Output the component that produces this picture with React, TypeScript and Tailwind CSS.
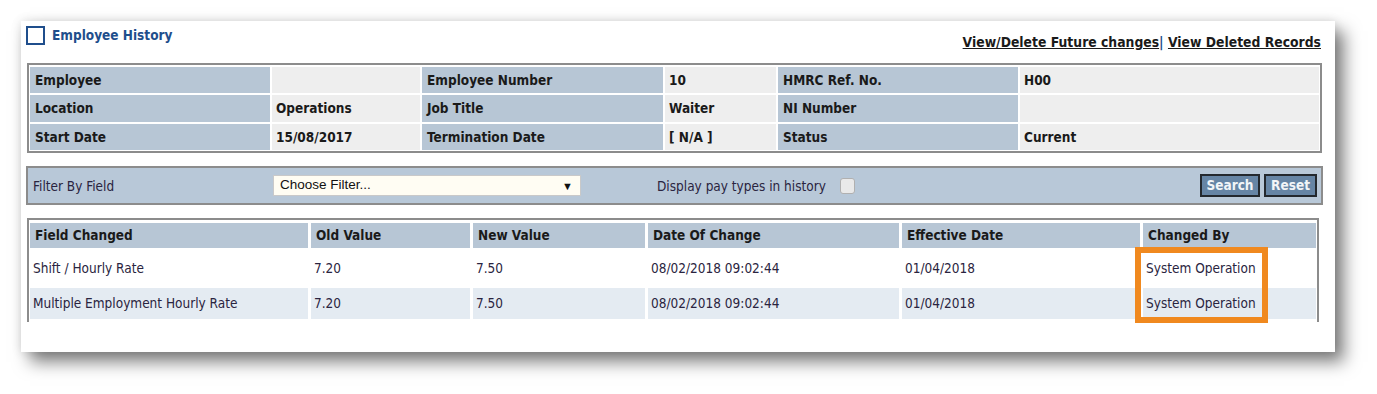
import React from "react";

const F = { fontFamily: '"DejaVu Sans Condensed", "DejaVu Sans", sans-serif' };

export default function App() {
  const info: [string, string, string, string, string, string][] = [
    ["Employee", "", "Employee Number", "10", "HMRC Ref. No.", "H00"],
    ["Location", "Operations", "Job Title", "Waiter", "NI Number", ""],
    ["Start Date", "15/08/2017", "Termination Date", "[ N/A ]", "Status", "Current"],
  ];
  const rows = [
    ["Shift / Hourly Rate", "7.20", "7.50", "08/02/2018 09:02:44", "01/04/2018", "System Operation"],
    ["Multiple Employment Hourly Rate", "7.20", "7.50", "08/02/2018 09:02:44", "01/04/2018", "System Operation"],
  ];
  const heads = ["Field Changed", "Old Value", "New Value", "Date Of Change", "Effective Date", "Changed By"];
  return (
    <div className="w-[1377px] h-[394px] bg-white pt-[21px] pl-[21px]" style={F}>
      <div className="relative w-[1314px] h-[331px] bg-white shadow-[9px_10px_16px_rgba(0,0,0,0.5),0_0_10px_rgba(0,0,0,0.12)] pl-[5px] pt-[5px]">
        {/* title row */}
        <div className="flex items-start justify-between w-[1295px] h-[37px]">
          <div className="flex items-center">
            <div className="w-[19px] h-[19px] border-2 border-[#1f4e8c]" />
            <span className="ml-[7px] text-[13.5px] font-bold text-[#1f4e8c] leading-none">Employee History</span>
          </div>
          <div className="mt-[10px] text-[13.8px] font-bold text-[#1a1a1a] leading-none">
            <span className="underline">View/Delete Future changes</span>
            <span className="text-[#1f4e8c]">| </span>
            <span className="underline">View Deleted Records</span>
          </div>
        </div>
        {/* info table */}
        <div className="ml-[1px] w-[1295px] border-2 border-[#8c8c8c] p-[1px]">
          <div className="grid grid-cols-[240px_148px_241px_111px_240px_1fr] gap-x-[2px] gap-y-[2px] pt-[1px]">
            {info.map((r, i) =>
              r.map((c, j) => (
                <div
                  key={i + "-" + j}
                  className={
                    "flex items-center text-[13.5px] font-bold text-[#1a1a1a] " +
                    (i === 1 ? "h-[27px] " : "h-[26px] ") +
                    (j % 2 === 0 ? "bg-[#b7c6d5] pl-[5px]" : "bg-[#eeeeee] pl-[4px]")
                  }
                >
                  {c}
                </div>
              ))
            )}
          </div>
        </div>
        {/* filter bar */}
        <div className="mt-[13px] w-[1297px] h-[39px] border-2 border-[#8c8c8c] bg-[#b8c8d8] flex items-center text-[13.5px] text-[#2a2440]">
          <span className="ml-[5px] mt-[1px] w-[240px]">Filter By Field</span>
          <div
            className="relative w-[308px] h-[21px] bg-[#fffdf3] border border-[#c9c9c9] flex items-center pl-[6px] text-[#111]"
            style={{ fontFamily: '"Liberation Sans", Arial, sans-serif', fontSize: 13.5 }}
          >
            Choose Filter...
            <span className="absolute right-[7px] top-[2px] text-[11px] text-[#111]">▼</span>
          </div>
          <span className="ml-[76px] mt-[1px] w-[183px] whitespace-nowrap">Display pay types in history</span>
          <div className="w-[15px] h-[16px] rounded-[3px] border border-[#b0b0b0] bg-[#e9e9e9]" />
          <div className="ml-auto mr-[4px] flex gap-[4px]">
            <div className="w-[60px] h-[23px] bg-[#6685a5] border-2 border-[#23282e] text-[#f2f5f8] text-[13.5px] font-bold flex items-center justify-center">Search</div>
            <div className="w-[53px] h-[23px] bg-[#6685a5] border-2 border-[#23282e] text-[#f2f5f8] text-[13.5px] font-bold flex items-center justify-center">Reset</div>
          </div>
        </div>
        {/* history table */}
        <div className="mt-[13px] ml-[1px] w-[1292px] h-[104px] border-2 border-b-0 border-[#8c8c8c] pt-[3px] pl-[1px] pr-[1px]">
          <div className="grid grid-cols-[278px_159px_172px_251px_238px_1fr] gap-x-[3px] gap-y-[2px]">
            {heads.map((h) => (
              <div key={h} className="h-[25px] bg-[#b7c6d5] flex items-center pl-[5px] text-[13.5px] font-bold text-[#1a1a1a]">
                {h}
              </div>
            ))}
            {rows.map((r, i) =>
              r.map((c, j) => (
                <div
                  key={i + "-" + j}
                  className={
                    "flex items-center pl-[3px] text-[13.5px] text-[#2a2440] " +
                    (i === 1 ? "h-[31px] bg-[#e4ebf2]" : "h-[36px] bg-white")
                  }
                >
                  {c}
                </div>
              ))
            )}
          </div>
        </div>
        {/* annotation */}
        <div className="absolute left-[1114px] top-[226px] w-[133px] h-[76px] border-[6px] border-[#f0891f]" />
      </div>
    </div>
  );
}
